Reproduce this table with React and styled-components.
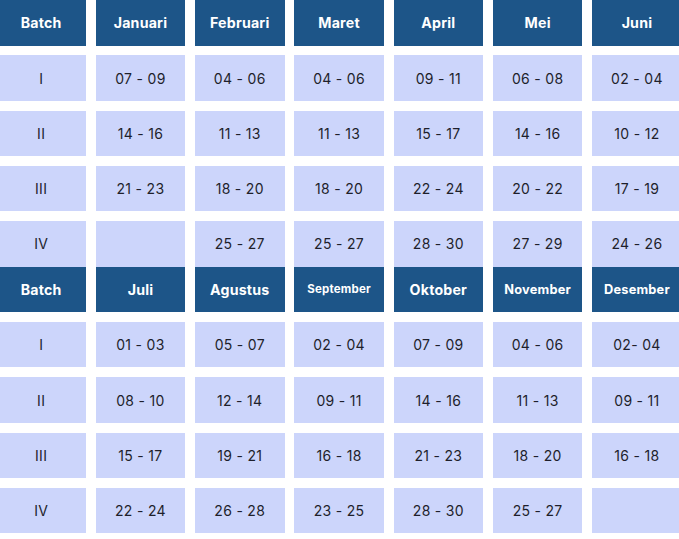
import React from 'react'
import styled, { createGlobalStyle } from 'styled-components'

const GlobalStyle = createGlobalStyle`
  html, body {
    margin: 0;
    padding: 0;
    background: #ffffff;
    overflow: hidden;
  }
  body {
    font-family: Inter, "Open Sans", "Liberation Sans", sans-serif;
  }
`

const Page = styled.div`
  width: 679px;
  height: 539px;
  overflow: hidden;
  background: #ffffff;
`

const Table = styled.div`
  margin-left: -3.6px;
  width: 685.3px;
  display: flex;
  flex-direction: column;
`

const Block = styled.div`
  display: grid;
  grid-template-columns: repeat(7, 89.5px);
  grid-auto-rows: 45.5px;
  column-gap: 9.8px;
  row-gap: 9.8px;
`

const headSizes = { xs: '11.5px', sm: '12.8px', md: '14.2px' }

const HeadCell = styled.div`
  display: flex;
  align-items: center;
  justify-content: center;
  background: #1d5588;
  color: #ffffff;
  font-weight: 700;
  font-size: ${p => headSizes[p.$size || 'md']};
  letter-spacing: 0.2px;
`

const Cell = styled.div`
  display: flex;
  align-items: center;
  justify-content: center;
  background: #ccd5fb;
  color: #1e1f2b;
  font-size: 14px;
  font-weight: 400;
  letter-spacing: 0.3px;
`

const firstHalf = {
  months: ['Januari', 'Februari', 'Maret', 'April', 'Mei', 'Juni'],
  rows: [
    ['I', '07 - 09', '04 - 06', '04 - 06', '09 - 11', '06 - 08', '02 - 04'],
    ['II', '14 - 16', '11 - 13', '11 - 13', '15 - 17', '14 - 16', '10 - 12'],
    ['III', '21 - 23', '18 - 20', '18 - 20', '22 - 24', '20 - 22', '17 - 19'],
    ['IV', '', '25 - 27', '25 - 27', '28 - 30', '27 - 29', '24 - 26'],
  ],
}

const secondHalf = {
  months: ['Juli', 'Agustus', 'September', 'Oktober', 'November', 'Desember'],
  sizes: { September: 'xs', November: 'sm', Desember: 'sm' },
  rows: [
    ['I', '01 - 03', '05 - 07', '02 - 04', '07 - 09', '04 - 06', '02- 04'],
    ['II', '08 - 10', '12 - 14', '09 - 11', '14 - 16', '11 - 13', '09 - 11'],
    ['III', '15 - 17', '19 - 21', '16 - 18', '21 - 23', '18 - 20', '16 - 18'],
    ['IV', '22 - 24', '26 - 28', '23 - 25', '28 - 30', '25 - 27', ''],
  ],
}

function Half({ data }) {
  const sizes = data.sizes || {}
  return (
    <Block>
      <HeadCell>Batch</HeadCell>
      {data.months.map(m => (
        <HeadCell key={m} $size={sizes[m]}>{m}</HeadCell>
      ))}
      {data.rows.map((row, i) =>
        row.map((v, j) => <Cell key={i + '-' + j}>{v}</Cell>)
      )}
    </Block>
  )
}

export default function App() {
  return (
    <>
      <GlobalStyle />
      <Page>
        <Table>
          <Half data={firstHalf} />
          <Half data={secondHalf} />
        </Table>
      </Page>
    </>
  )
}
